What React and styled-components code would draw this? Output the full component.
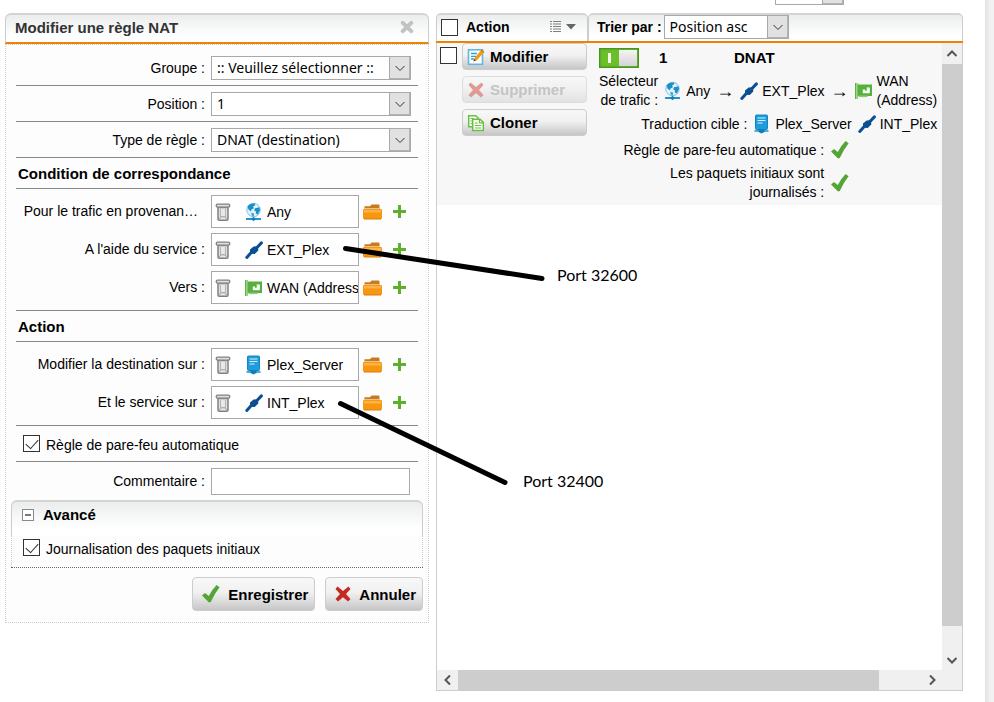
import { useState } from 'react'
import styled, { createGlobalStyle, css } from 'styled-components'

const GlobalStyle = createGlobalStyle`
    * {
        box-sizing: border-box;
    }

    body {
        margin: 0;
        background: #fff;
        color: #000;
        font-family: "Liberation Sans", Arial, sans-serif;
        font-size: 14px;
        line-height: 19px;
    }

    button, input, select {
        margin: 0;
        font: inherit;
        color: inherit;
    }

    svg {
        display: block;
        flex: none;
    }
`;

/* ---------- icons ---------- */

const TrashIcon = () => (
    <svg width="16" height="18" viewBox="0 0 16 18">
        <path d="M3 4.5h10v11.5q0 1.2-1.2 1.2H4.2Q3 17.2 3 16z" fill="#e8e8e8" stroke="#808080" strokeWidth="1.5" />
        <path d="M5.4 6v7.5M10.6 6v7.5" stroke="#b4b4b4" strokeWidth="1.2" />
        <path d="M4.5 16L5.5 13.8h5l1 2.2" fill="none" stroke="#999" />
        <rect x="1.2" y="1.2" width="13.6" height="3" rx="1.4" fill="#ddd" stroke="#808080" strokeWidth="1.3" />
    </svg>
)

const GlobeIcon = () => (
    <svg width="18" height="20" viewBox="0 0 18 20">
        <circle cx="8.500" cy="8" r="6.700" fill="#e3f3fb" stroke="#7cc2e6" />
        <path d="M2.500 4.200Q5 1 9.500 1.600L10.500 3 8.100 4.600 8.900 6.200 6.500 7.600 5.900 9.400 3.500 7.600z" fill="#1b8fca" />
        <path d="M10 6.300L14.500 5.200 15 8 12.800 12.400 10.800 11.600 11 9.400 9.200 8.400z" fill="#1b8fca" />
        <path d="M6.100 10.800L9.100 11.400 8.900 14.400 6.900 13.800z" fill="#3ba3d6" />
        <path d="M1 17h15" stroke="#1e96d0" strokeWidth="2" />
        <path d="M6 17L8.500 14.700l2.500 2.300L8.500 19.300z" fill="#147fb8" />
    </svg>
)

const ServiceIcon = () => (
    <svg width="18" height="18" viewBox="0 0 18 18">
        <path d="M1.800 16.400L5.800 12M12 6.500l4.400-4.600" stroke="#0b4f93" strokeWidth="3" strokeLinecap="round" />
        <path d="M5 8.400L8.600 5.400 13.200 5.200 13.200 9.600 9.800 13 5 12.800z" fill="#0b4f93" />
    </svg>
)

const InterfaceIcon = () => (
    <svg width="18" height="18" viewBox="0 0 18 18">
        <rect x="0" y="1" width="2.600" height="16" fill="#5cb246" />
        <rect x="1" y="1" width="1" height="16" fill="#9bd488" />
        <rect x="2.600" y="2.500" width="14.400" height="11.500" fill="#55b03c" />
        <path d="M7.800 7.400h2.200v1.400h1.800V5.600h3v5.600H7.800z" fill="#fff" />
        <path d="M11.800 5.600h1.800v1.800h-1.800z" fill="#d5edcc" />
        <path d="M3.500 13.500h9v1.600h-9z" fill="#8ccb78" />
    </svg>
)

const ServerIcon = () => (
    <svg width="18" height="20" viewBox="0 0 18 20">
        <rect x="2.500" y="1" width="12" height="14.500" rx="1" fill="#1f9cdb" stroke="#1585c0" />
        <path d="M4.500 4h8M4.500 6.500h8M4.500 9h5" stroke="#d8f0fb" strokeWidth="1.200" />
        <path d="M1.500 17h14" stroke="#3aa4d8" strokeWidth="1.800" />
        <path d="M5.500 15.500h6V18L8.500 19.500 5.500 18z" fill="#157db4" />
    </svg>
)

const FolderIcon = () => (
    <svg width="22" height="18" viewBox="0 0 22 18">
        <path d="M2.500 5V3.200h5.500L9.500 1.600h7q1 0 1 1V6h-15z" fill="#c97a1d" />
        <path d="M2.500 5h15v2h-15z" fill="#e8c39a" />
        <rect x="1" y="6" width="19" height="10" rx="1.200" fill="#f7960f" />
        <path d="M2 7h17v2.500H2z" fill="#ffb347" />
        <path d="M2 16h17" stroke="#dc7c05" />
    </svg>
)

const PlusIcon = () => (
    <svg width="16" height="16" viewBox="0 0 16 16">
        <path d="M7.500 1v13M1 7.500h13" stroke="#5cb02c" strokeWidth="3" />
    </svg>
)

const CheckIcon = () => (
    <svg width="20" height="20" viewBox="0 0 20 20">
        <path d="M1 11.500L4 9 7.800 12Q11 5.500 15.600 1L18.600 3.200Q13.500 9.600 9.800 18L8 18.600z" fill="#55a436" />
    </svg>
)

const CrossIcon = ({ color = '#c42a20' }) => (
    <svg width="18" height="18" viewBox="0 0 18 18">
        <path d="M3.500 1.500L9 6 14.500 1.500 16.500 4 12 9l4.500 5-2.500 2.600L9 12.200 4 16.600 1.500 14 6 9 1.500 4z" fill={color} />
    </svg>
)

const CloseIcon = () => (
    <svg width="14" height="14" viewBox="0 0 14 14">
        <path d="M2.800 2.800l8.400 8.400M11.200 2.800l-8.400 8.400" stroke="#c2c2c2" strokeWidth="4" strokeLinecap="round" />
    </svg>
)

const EditIcon = () => (
    <svg width="18" height="18" viewBox="0 0 18 18">
        <rect x="1.500" y="1.800" width="14" height="14.500" fill="#fff" stroke="#5fb8e2" strokeWidth="1.600" />
        <path d="M4 5.500h6M4 8.300h5M4 11h3" stroke="#2b9fd6" strokeWidth="1.300" />
        <path d="M6.500 13.500L7.500 10 14.500 1.800 17.200 4 10 12.200z" fill="#f29a1c" />
        <path d="M6.500 13.500L7.200 11 8.900 12.600z" fill="#444" />
        <path d="M13.600 2.800L14.700 1.500 17.400 3.700 16.300 5z" fill="#d77f12" />
    </svg>
)

const CloneIcon = () => (
    <svg width="18" height="18" viewBox="0 0 18 18">
        <path d="M1.700 1.700h7l2.600 2.600v8.500H1.700z" fill="#fff" stroke="#69bf3f" strokeWidth="1.500" />
        <path d="M3.500 4.500h3M3.500 7h2M3.500 9.500h2" stroke="#69bf3f" strokeWidth="1.200" />
        <path d="M5.700 5.200h7.400l3.200 3.200v8.100H5.700z" fill="#fff" stroke="#69bf3f" strokeWidth="1.500" />
        <path d="M12.500 5.500v3.400h3.500" fill="none" stroke="#69bf3f" strokeWidth="1.200" />
        <path d="M7.800 9h3M7.800 11.500h6.400M7.800 14h6.400" stroke="#69bf3f" strokeWidth="1.200" />
    </svg>
)

const ListIcon = () => (
    <svg width="11" height="12" viewBox="0 0 11 12">
        <path d="M0 .5h2M0 3h2M0 5.500h2M0 8h2M0 10.500h2M3 .5h8M3 3h8M3 5.500h8M3 8h8M3 10.500h8" stroke="#808080" strokeWidth="1.200" />
    </svg>
)

const CaretIcon = () => (
    <svg width="10" height="6" viewBox="0 0 10 6">
        <path d="M0 0h10L5 5.500z" fill="#666" />
    </svg>
)

const MinusBoxIcon = () => (
    <svg width="12" height="12" viewBox="0 0 12 12">
        <rect x=".5" y=".5" width="11" height="11" fill="#fff" stroke="#888" />
        <path d="M3 6h6" stroke="#222" strokeWidth="1.200" />
    </svg>
)

const Chevron = ({ turn = 0, weight = 2, color = '#555' }) => (
    <svg width="12" height="12" viewBox="0 0 12 12">
        <path d="M1.500 4L6 8.500 10.500 4" fill="none" stroke={color} strokeWidth={weight} transform={`rotate(${turn} 6 6)`} />
    </svg>
)

/* ---------- shared parts ---------- */

const headerLook = css`
    border: 1px solid #ccc;
    border-top: 2px solid #d3d5d5;
    background: linear-gradient(#ebeded, #fff 80%);
`;

const SelectWrap = styled.span`
    position: relative;
    display: block;
    width: ${props => props.$width};

    svg {
        position: absolute;
        right: 5px;
        top: 6px;
        pointer-events: none;
    }
`;

const StyledSelect = styled.select`
    display: block;
    appearance: none;
    width: 100%;
    height: 24px;
    padding: 0 24px 0 5px;
    border: 1px solid #a9a9a9;
    border-radius: 0;
    background: linear-gradient(#e1e1e1, #e1e1e1) right / 20px 100% no-repeat, #fff;
    font-family: "Noto Sans", "Open Sans", sans-serif;
    font-size: 14px;
    font-weight: normal;
    line-height: 20px;
`;

const SelectDivider = styled.span`
    position: absolute;
    top: 0;
    right: 0;
    width: 22px;
    height: 24px;
    border: 1px solid #a9a9a9;
    box-shadow: inset -1px -1px #b4b4b4;
    pointer-events: none;
`;

const Select = ({ id, label, options, width = '200px' }) => (
    <SelectWrap $width={width}>
        <StyledSelect id={id} aria-label={label}>
            {options.map(option => <option key={option}>{option}</option>)}
        </StyledSelect>
        <SelectDivider />
        <Chevron weight={1} color="#333" />
    </SelectWrap>
)

const Checkbox = styled.input.attrs({ type: 'checkbox' })`
    appearance: none;
    flex: none;
    width: 17px;
    height: 17px;
    border: 1px solid #333;
    background: #fff;

    &:checked::before {
        content: '';
        display: block;
        width: 11px;
        height: 6px;
        margin: 3px 0 0 2px;
        border: solid #333;
        border-width: 0 0 1px 1px;
        transform: rotate(-48deg);
    }
`;

const IconButton = styled.button`
    display: flex;
    padding: 0;
    border: 0;
    background: none;
    cursor: pointer;
`;

const PushButton = styled.button`
    display: flex;
    align-items: center;
    gap: ${props => props.$small ? '5px' : '7px'};
    height: ${props => props.$small ? '27px' : '34px'};
    padding: ${props => props.$small ? '0 4px' : '0 6px 0 8px'};
    border: 1px solid #ccc;
    border-radius: 4px;
    background: linear-gradient(#f8f8f8, #f1f1f1 45%, #c6c6c6);
    font-size: 15px;
    font-weight: bold;
    white-space: nowrap;

    &:disabled {
        border-color: #ddd;
        background: linear-gradient(#f7f7f7, #f1f1f1 45%, #e2e2e2);
        color: #c4c4c4;
    }
`;

/* ---------- page ---------- */

const Shell = styled.div`
    position: relative;
    display: flex;
    min-height: 100vh;
`;

const Main = styled.div`
    flex: 1;
    min-width: 0;
    display: flex;
    flex-direction: column;
    padding: 0 22px 11px 5px;
`;

const PageEdge = styled.div`
    width: 9px;
    background: linear-gradient(to right, #e2e2e2, #f2f2f2 60%);
`;

const TopStrip = styled.div`
    display: flex;
    justify-content: flex-end;
    align-items: flex-end;
    height: 5px;
    margin-bottom: 8px;
    padding-right: 119px;
    overflow: hidden;
`;

const Columns = styled.div`
    flex: 1;
    display: grid;
    grid-template-columns: minmax(0, 424fr) minmax(0, 527fr);
    gap: 7px;
`;

/* ---------- rule form ---------- */

const Panel = styled.form`
    align-self: start;
`;

const PanelHeader = styled.header`
    ${headerLook}
    display: flex;
    justify-content: space-between;
    align-items: center;
    height: 31px;
    padding: 0 14px 3px 9px;
    border-bottom: 2px solid #ef8200;
    border-radius: 6px 6px 0 0;

    h1 {
        margin: 0;
        color: #333;
        font-size: 15px;
    }
`;

const PanelBody = styled.div`
    padding: 5px 5px 11px;
    border: 1px dotted #ccc;
    background: #fdfdfd;
`;

const Section = styled.div`
    display: flex;
    flex-direction: column;
    gap: 5px;
    margin: 0 5px;
    padding: ${props => props.$group ? '6px 0' : '6px 0 5px'};
    border-bottom: ${props => props.$last ? '0' : '1px solid #888'};
`;

const SectionTitle = styled.h2`
    margin: 0 5px;
    padding: 6px 2px 5px;
    border-bottom: 1px solid #888;
    font-size: 15px;
    line-height: 19px;
`;

const FormRow = styled.div`
    display: flex;
    align-items: center;
    gap: 6px;
`;

const Label = styled.label`
    width: 189px;
    padding-right: ${props => props.$cut ? '7px' : '0'};
    text-align: right;
    white-space: nowrap;
`;

const CheckLabel = styled.label`
    display: flex;
    align-items: flex-start;
    gap: 6px;
    height: 24px;
    padding-left: 7px;
    line-height: 27px;

    input {
        margin-top: 3px;
    }
`;

const ObjectBox = styled.div`
    display: flex;
    align-items: center;
    width: 148px;
    height: 33px;
    padding: 1px 0 0 3px;
    overflow: hidden;
    border: 1px solid #a9a9a9;
    background: #fff;
    white-space: nowrap;
`;

const ObjectName = styled.span`
    display: flex;
    align-items: center;
    gap: 4px;
    margin-left: ${props => props.$inList ? '0' : '14px'};
`;

const ObjectTools = styled.span`
    display: flex;
    align-items: center;
    gap: 8px;
    margin-left: -3px;
`;

const CommentInput = styled.input`
    width: 199px;
    height: 27px;
    padding: 0 5px;
    border: 1px solid #a9a9a9;
    background: #fff;
`;

const Advanced = styled.section`
    border-bottom: 1px dotted #666;
`;

const AdvancedHeader = styled.header`
    ${headerLook}
    border-bottom: 0;
    border-radius: 6px 6px 0 0;
    height: 35px;
    padding: 2px 10px;

    button {
        gap: 9px;
        align-items: center;
        font-size: 15px;
        font-weight: bold;
        line-height: 22px;
    }
`;

const AdvancedBody = styled.div`
    height: 32px;
    padding: 1px 4px;
    border: dotted #ccc;
    border-width: 0 1px;
`;

const Actions = styled.div`
    display: flex;
    justify-content: flex-end;
    gap: 10px;
    padding-top: 9px;
`;

/* ---------- rule list ---------- */

const ListPanel = styled.section`
    display: flex;
    flex-direction: column;
`;

const ListHeader = styled.header`
    display: flex;
    height: 30px;
    border-bottom: 2px solid #ef8200;
`;

const HeaderCell = styled.div`
    ${headerLook}
    flex: ${props => props.$grow ? '1' : '0 0 152px'};
    display: flex;
    align-items: center;
    gap: ${props => props.$grow ? '2px' : '8px'};
    padding: 0 11px 2px ${props => props.$grow ? '8px' : '4px'};
    border-bottom: 0;
    border-radius: 5px 5px 0 0;
    font-weight: bold;
    white-space: nowrap;
`;

const ViewButton = styled(IconButton)`
    align-items: center;
    gap: 5px;
    margin-left: auto;
`;

const ListBody = styled.div`
    flex: 1;
    display: grid;
    grid-template-columns: minmax(0, 1fr) 20px;
    grid-template-rows: 1fr 20px;
    border: 1px solid #ccc;
    border-top: 0;
    background: #f0f0f0;
`;

const ListView = styled.div`
    background: #fff;
    overflow: hidden;
`;

const RuleRow = styled.article`
    display: flex;
    align-items: flex-start;
    padding-bottom: 3px;
    background: #f7f7f7;

    > input {
        margin: 4px 5px 0 3px;
    }
`;

const RuleButtons = styled.div`
    flex: 0 0 125px;
    display: flex;
    flex-direction: column;
    gap: 6px;
`;

const RuleDetails = styled.div`
    flex: 1;
    display: flex;
    flex-direction: column;
    gap: 2px;
    padding: 5px 5px 0 12px;
`;

const RuleTitle = styled.div`
    display: grid;
    grid-template-columns: 60px 75px 1fr;
    align-items: start;
    height: 22px;
    font-size: 15px;
    font-weight: bold;
`;

const Toggle = styled.button`
    display: flex;
    justify-content: space-between;
    width: 40px;
    height: 20px;
    padding: 1px 1px 1px 8px;
    border: 1px solid #4a9422;
    background: #6abf2a;
    box-shadow: inset 0 0 2px #3f7f1c;

    &::before {
        content: '';
        width: 3px;
        height: 10px;
        margin-top: 3px;
        background: #f4faf0;
    }

    &::after {
        content: '';
        width: 18px;
        height: 16px;
        background: linear-gradient(#f4f4f4, #d4d4d8);
    }
`;

const DetailLine = styled.div`
    display: flex;
    justify-content: flex-end;
    align-items: center;
    gap: 6px;
    min-height: ${props => props.$single ? '24px' : '38px'};
    padding-right: ${props => props.$flag ? '87px' : '0'};
    text-align: right;
    white-space: nowrap;
`;

const Arrow = styled.span`
    font-size: 18px;
`;

const AddressName = styled.span`
    text-align: left;
`;

const ScrollBar = styled.div`
    display: flex;
    flex-direction: ${props => props.$vertical ? 'column' : 'row'};
    background: #f0f0f0;

    button {
        flex: 0 0 21px;
        justify-content: center;
        align-items: center;
    }
`;

const ScrollTrack = styled.div`
    flex: 1;
    display: flex;
    flex-direction: inherit;
`;

const ScrollThumb = styled.div`
    flex: 0 0 ${props => props.$size};
    background: #cdcdcd;
`;

/* ---------- hand-drawn notes ---------- */

const Strokes = styled.svg`
    position: absolute;
    top: 0;
    left: 0;
    pointer-events: none;
`;

const Note = styled.span`
    position: absolute;
    left: ${props => props.$x}px;
    top: ${props => props.$y}px;
    font-family: Lato, "Open Sans", sans-serif;
    font-size: 16px;
    line-height: 20px;
`;

const matchObjects = [
    { id: 'source', label: 'Pour le trafic en provenan…', cut: true, Icon: GlobeIcon, name: 'Any' },
    { id: 'service', label: 'A l\'aide du service :', Icon: ServiceIcon, name: 'EXT_Plex' },
    { id: 'target', label: 'Vers :', Icon: InterfaceIcon, name: 'WAN (Address)' },
]

const actionObjects = [
    { id: 'new-target', label: 'Modifier la destination sur :', Icon: ServerIcon, name: 'Plex_Server' },
    { id: 'new-service', label: 'Et le service sur :', Icon: ServiceIcon, name: 'INT_Plex' },
]

const ObjectRow = ({ id, label, cut, Icon, name }) => (
    <FormRow>
        <Label as="span" id={id} $cut={cut}>{label}</Label>
        <ObjectBox role="group" aria-labelledby={id}>
            <IconButton type="button" aria-label="Effacer"><TrashIcon /></IconButton>
            <ObjectName><Icon />{name}</ObjectName>
        </ObjectBox>
        <ObjectTools>
            <IconButton type="button" aria-label="Parcourir"><FolderIcon /></IconButton>
            <IconButton type="button" aria-label="Ajouter"><PlusIcon /></IconButton>
        </ObjectTools>
    </FormRow>
)

const SelectRow = ({ id, label, options }) => (
    <Section>
        <FormRow>
            <Label htmlFor={id}>{label}</Label>
            <Select id={id} options={options} />
        </FormRow>
    </Section>
)

function RuleForm() {
    const [open, setOpen] = useState(true)

    return (
        <Panel onSubmit={e => e.preventDefault()}>
            <PanelHeader>
                <h1>Modifier une règle NAT</h1>
                <IconButton type="button" aria-label="Fermer"><CloseIcon /></IconButton>
            </PanelHeader>
            <PanelBody>
                <SelectRow id="group" label="Groupe :" options={[':: Veuillez sélectionner ::']} />
                <SelectRow id="position" label="Position :" options={['1']} />
                <SelectRow id="type" label="Type de règle :" options={['DNAT (destination)']} />

                <SectionTitle>Condition de correspondance</SectionTitle>
                <Section $group>
                    {matchObjects.map(item => <ObjectRow key={item.id} {...item} />)}
                </Section>

                <SectionTitle>Action</SectionTitle>
                <Section $group>
                    {actionObjects.map(item => <ObjectRow key={item.id} {...item} />)}
                </Section>

                <Section>
                    <CheckLabel><Checkbox defaultChecked />Règle de pare-feu automatique</CheckLabel>
                </Section>
                <Section $last>
                    <FormRow>
                        <Label htmlFor="comment">Commentaire :</Label>
                        <CommentInput id="comment" type="text" />
                    </FormRow>
                </Section>

                <Advanced>
                    <AdvancedHeader>
                        <IconButton type="button" aria-expanded={open} onClick={() => setOpen(!open)}>
                            <MinusBoxIcon />Avancé
                        </IconButton>
                    </AdvancedHeader>
                    {open && (
                        <AdvancedBody>
                            <CheckLabel><Checkbox defaultChecked />Journalisation des paquets initiaux</CheckLabel>
                        </AdvancedBody>
                    )}
                </Advanced>

                <Actions>
                    <PushButton type="submit"><CheckIcon />Enregistrer</PushButton>
                    <PushButton type="button"><CrossIcon />Annuler</PushButton>
                </Actions>
            </PanelBody>
        </Panel>
    )
}

function RuleList() {
    const [enabled, setEnabled] = useState(true)

    return (
        <ListPanel>
            <ListHeader>
                <HeaderCell>
                    <Checkbox aria-label="Tout sélectionner" />
                    Action
                    <ViewButton aria-label="Affichage"><ListIcon /><CaretIcon /></ViewButton>
                </HeaderCell>
                <HeaderCell $grow>
                    <label htmlFor="sort">Trier par :</label>
                    <Select id="sort" options={['Position asc']} width="125px" />
                </HeaderCell>
            </ListHeader>
            <ListBody>
                <ListView>
                    <RuleRow>
                        <Checkbox aria-label="Sélectionner la règle 1" />
                        <RuleButtons>
                            <PushButton $small><EditIcon />Modifier</PushButton>
                            <PushButton $small disabled><CrossIcon color="#e09a94" />Supprimer</PushButton>
                            <PushButton $small><CloneIcon />Cloner</PushButton>
                        </RuleButtons>
                        <RuleDetails>
                            <RuleTitle>
                                <Toggle aria-label="Activer la règle" aria-pressed={enabled} onClick={() => setEnabled(!enabled)} />
                                <span>1</span>
                                <span>DNAT</span>
                            </RuleTitle>
                            <DetailLine>
                                <span>Sélecteur<br />de trafic :</span>
                                <ObjectName $inList><GlobeIcon />Any</ObjectName>
                                <Arrow>→</Arrow>
                                <ObjectName $inList><ServiceIcon />EXT_Plex</ObjectName>
                                <Arrow>→</Arrow>
                                <ObjectName $inList><InterfaceIcon /><AddressName>WAN<br />(Address)</AddressName></ObjectName>
                            </DetailLine>
                            <DetailLine $single>
                                <span>Traduction cible :</span>
                                <ObjectName $inList><ServerIcon />Plex_Server</ObjectName>
                                <ObjectName $inList><ServiceIcon />INT_Plex</ObjectName>
                            </DetailLine>
                            <DetailLine $single $flag>
                                <span>Règle de pare-feu automatique :</span>
                                <CheckIcon />
                            </DetailLine>
                            <DetailLine $flag>
                                <span>Les paquets initiaux sont<br />journalisés :</span>
                                <CheckIcon />
                            </DetailLine>
                        </RuleDetails>
                    </RuleRow>
                </ListView>
                <ScrollBar $vertical>
                    <IconButton aria-label="Défiler vers le haut"><Chevron turn={180} /></IconButton>
                    <ScrollTrack><ScrollThumb $size="96%" /></ScrollTrack>
                    <IconButton aria-label="Défiler vers le bas"><Chevron /></IconButton>
                </ScrollBar>
                <ScrollBar>
                    <IconButton aria-label="Défiler à gauche"><Chevron turn={90} /></IconButton>
                    <ScrollTrack><ScrollThumb $size="91%" /></ScrollTrack>
                    <IconButton aria-label="Défiler à droite"><Chevron turn={-90} /></IconButton>
                </ScrollBar>
            </ListBody>
        </ListPanel>
    )
}

export default function App() {
    return (
        <>
            <GlobalStyle />
            <Shell>
                <Main>
                    <TopStrip>
                        <Select label="Nombre de lignes" options={['']} width="69px" />
                    </TopStrip>
                    <Columns>
                        <RuleForm />
                        <RuleList />
                    </Columns>
                </Main>
                <PageEdge />

                <Strokes width="620" height="500" viewBox="0 0 620 500">
                    <path d="M345.500 248.500L542 278.500M340.500 403.500L505 482.500" stroke="#000" strokeWidth="5" strokeLinecap="round" />
                </Strokes>
                <Note $x={557} $y={265}>Port 32600</Note>
                <Note $x={523} $y={471}>Port 32400</Note>
            </Shell>
        </>
    )
}
